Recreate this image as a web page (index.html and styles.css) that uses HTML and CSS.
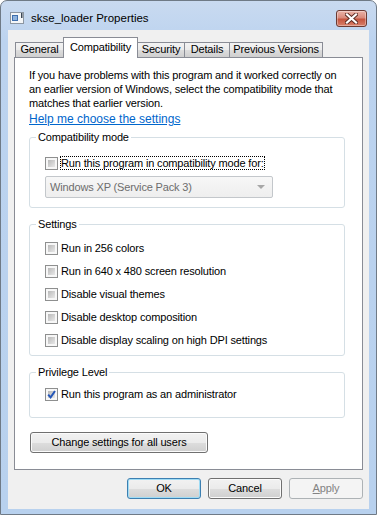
FILE: index.html
```html
<!DOCTYPE html>
<html lang="en">
<head>
  <meta charset="UTF-8" />
  <title>skse_loader Properties</title>
  <link rel="stylesheet" href="styles.css">
</head>
<body>
  <div class="window">
    <div class="titlebar">
      <svg class="app-icon" width="14" height="14" viewBox="0 0 14 14">
        <rect x="0.5" y="1.5" width="13" height="11" fill="#f4f6f8" stroke="#8c96a2" />
        <rect x="2" y="4" width="6" height="6" fill="#3f6fae" />
        <rect x="3" y="5" width="4" height="4" fill="#8fb3de" />
        <rect x="11" y="2" width="1.5" height="5" fill="#3b4756" />
      </svg>
      <span class="title">skse_loader Properties</span>
      <div class="close">
        <svg width="13" height="11" viewBox="0 0 13 11">
          <path d="M2 1.5 L11 9.5 M11 1.5 L2 9.5" stroke="#5a2a22" stroke-width="4" stroke-linecap="square" />
          <path d="M2 1.5 L11 9.5 M11 1.5 L2 9.5" stroke="#fff" stroke-width="2.2" stroke-linecap="square" />
        </svg>
      </div>
    </div>

    <div class="client">
      <div class="tabs">
        <div class="tab tab-general">General</div>
        <div class="tab tab-compat active">Compatibility</div>
        <div class="tab tab-security">Security</div>
        <div class="tab tab-details">Details</div>
        <div class="tab tab-prev">Previous Versions</div>
      </div>

      <div class="panel">
        <p class="intro">If you have problems with this program and it worked correctly on<br>an earlier version of Windows, select the compatibility mode that<br>matches that earlier version.</p>
        <a class="help" href="#">Help me choose the settings</a>

        <fieldset class="group group-compat">
          <legend>Compatibility mode</legend>
          <div class="check"><span class="box"></span><span class="label focus">Run this program in compatibility mode for:</span></div>
          <div class="combo"><span>Windows XP (Service Pack 3)</span><span class="arrow"></span></div>
        </fieldset>

        <fieldset class="group group-settings">
          <legend>Settings</legend>
          <div class="check"><span class="box"></span><span class="label">Run in 256 colors</span></div>
          <div class="check"><span class="box"></span><span class="label">Run in 640 x 480 screen resolution</span></div>
          <div class="check"><span class="box"></span><span class="label">Disable visual themes</span></div>
          <div class="check"><span class="box"></span><span class="label">Disable desktop composition</span></div>
          <div class="check"><span class="box"></span><span class="label">Disable display scaling on high DPI settings</span></div>
        </fieldset>

        <fieldset class="group group-priv">
          <legend>Privilege Level</legend>
          <div class="check">
            <span class="box checked">
              <svg width="11" height="11" viewBox="0 0 11 11"><path d="M2.2 5.6 L4.6 8.4 L9 2" fill="none" stroke="#2456b8" stroke-width="2" /></svg>
            </span>
            <span class="label">Run this program as an administrator</span>
          </div>
        </fieldset>

        <button class="btn btn-all">Change settings for all users</button>
      </div>

      <div class="buttons">
        <button class="btn btn-default">OK</button>
        <button class="btn">Cancel</button>
        <button class="btn btn-disabled"><u>A</u>pply</button>
      </div>
    </div>
  </div>
</body>
</html>
```

FILE: styles.css
```css
body { margin: 0; font-family: "Liberation Sans", Arial, sans-serif; font-size: 11px; letter-spacing: -0.15px; color: #000; background: #fff; }

.window { width: 377px; height: 515px; box-sizing: border-box; display: flex; flex-direction: column; border: 1px solid #6f7a86; border-radius: 7px 7px 0 0; background: linear-gradient(#c9daf0, #bcd3ef 40px, #b8d1ee); }

.titlebar { height: 29px; box-sizing: border-box; padding: 5px 9px 0 9px; display: flex; align-items: center; }
.app-icon { flex: none; }
.title { margin-left: 7px; font-size: 11.5px; letter-spacing: 0; color: #000; }
.close { margin-left: auto; margin-top: 1px; width: 31px; height: 17px; box-sizing: border-box; border: 1px solid #6b3a32; border-radius: 3px; display: flex; align-items: center; justify-content: center; background: linear-gradient(#eab3a8, #d98a7b 45%, #c5553f 55%, #d9806a); box-shadow: inset 0 0 0 1px rgba(255,255,255,0.35); }

.client { flex: 1; margin: 0 7px 5px 7px; padding: 7px 6px 0 6px; background: #f0f0f0; display: flex; flex-direction: column; }

.tabs { height: 21px; display: flex; align-items: flex-end; padding-left: 1px; margin-bottom: -1px; position: relative; z-index: 1; }
.tab { box-sizing: border-box; height: 15px; margin-bottom: 1px; margin-left: -1px; border: 1px solid #898c95; border-bottom: 0; line-height: 13px; text-align: center; background: linear-gradient(#f3f3f3, #ebebeb 50%, #dddddd 51%, #cfcfcf); }
.tab-general { width: 49px; margin-left: 0; }
.tab-compat { width: 75px; }
.tab-security { width: 48px; }
.tab-details { width: 46px; }
.tab-prev { width: 94px; }
.tab.active { height: 21px; margin-bottom: 0; padding-top: 2px; line-height: 14px; background: #fff; }

.panel { height: 413px; box-sizing: border-box; border: 1px solid #898c95; background: #fff; padding: 10px 17px 0 14px; }
.intro { margin: 0; line-height: 14px; white-space: nowrap; }
.help { display: block; margin-top: 2px; line-height: 14px; font-size: 12px; letter-spacing: 0; color: #0066cc; }

.group { margin: 9px 0 0 0; padding: 10px 14px 8px 15px; border: 1px solid #d5dfe5; border-radius: 3px; min-width: 0; }
.group legend { padding: 0 2px; margin-left: -9px; line-height: 14px; }
.group-compat { margin-top: 4px; padding-top: 12px; padding-bottom: 9px; }
.group-priv { padding-top: 8px; padding-bottom: 16px; }

.check { display: flex; align-items: center; height: 14px; line-height: 14px; }
.check + .check { margin-top: 9px; }
.box { flex: none; width: 13px; height: 13px; box-sizing: border-box; padding: 2px; border: 1px solid #8e8f8f; background: linear-gradient(135deg, #b9b9b9, #e8e8e8) content-box, #f7f7f7; margin-right: 3px; }
.box svg { display: block; margin: -2px; }
.label.focus { outline: 1px dotted #000; outline-offset: -1px; padding: 0 1px; margin-left: -1px; }

.combo { margin-top: 6px; width: 228px; height: 22px; box-sizing: border-box; border: 1px solid #c3c7cb; border-radius: 2px; background: linear-gradient(#f7f7f7, #eeeeee); color: #6d6d6d; display: flex; align-items: center; justify-content: space-between; padding: 0 7px 0 4px; }
.arrow { width: 0; height: 0; border-left: 4px solid transparent; border-right: 4px solid transparent; border-top: 4px solid #a7a7a7; }

.btn { font-family: "Liberation Sans", Arial, sans-serif; font-size: 11px; letter-spacing: -0.15px; color: #000; height: 21px; box-sizing: border-box; padding: 0; line-height: 19px; border: 1px solid #707070; border-radius: 3px; background: linear-gradient(#f2f2f2, #ebebeb 50%, #dddddd 51%, #cfcfcf); box-shadow: inset 0 0 0 1px #fbfbfb; }
.btn-all { display: block; margin: 14px 0 0 1px; width: 178px; }

.buttons { margin-top: 8px; display: flex; justify-content: flex-end; gap: 7px; }
.buttons .btn { width: 74px; }
.btn-default { border-color: #3c7fb1; box-shadow: inset 0 0 0 1px #9fdcf5; }
.btn-disabled { border-color: #adb2b5; background: #f4f4f4; box-shadow: none; color: #838383; }
```
